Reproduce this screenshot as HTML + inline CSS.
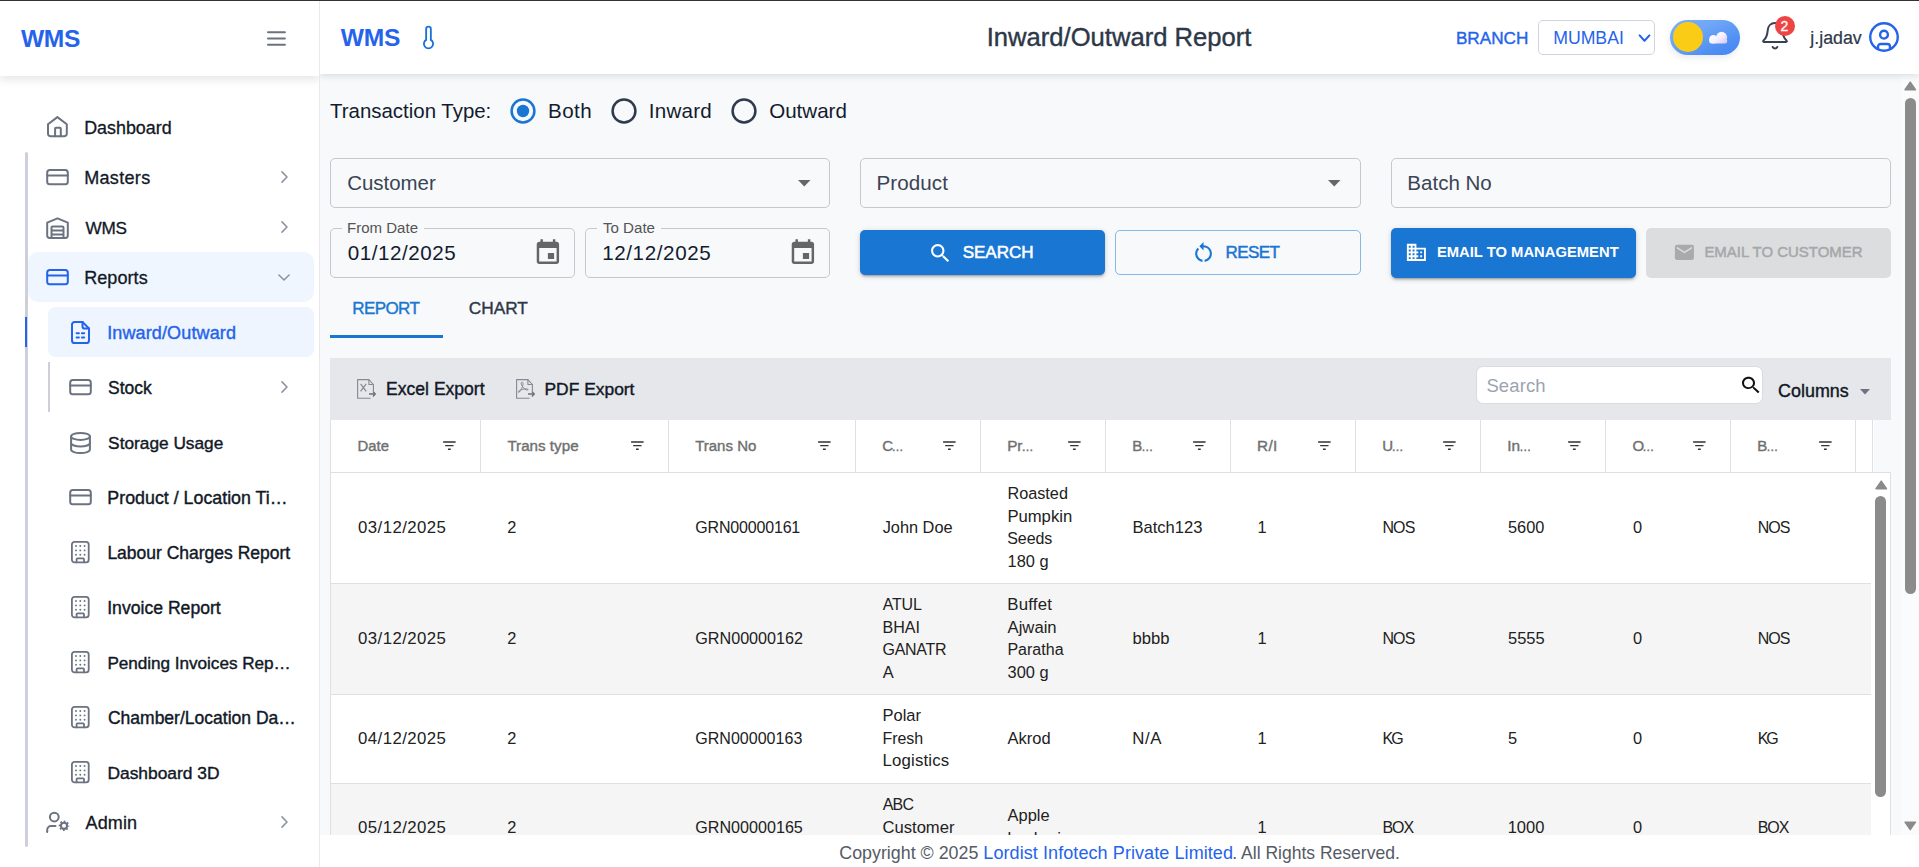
<!DOCTYPE html><html lang="en"><head><meta charset="utf-8"><title>Inward/Outward Report - WMS</title><style>
*{box-sizing:border-box;margin:0;padding:0}
html,body{width:1919px;height:867px;overflow:hidden}
body{position:relative;background:#f8f9fb;font-family:"Liberation Sans",sans-serif;color:#212121}
.t{position:absolute;white-space:nowrap;display:block}
.abs{position:absolute}
svg{position:absolute;overflow:visible}
#topline{position:absolute;left:0;top:0;width:1919px;height:1px;background:#333;z-index:50}
#sidebar{position:absolute;left:0;top:0;width:320px;height:867px;background:#fff;border-right:1px solid #e7e9ee;z-index:5}
#sbhead{position:absolute;left:0;top:0;width:319px;height:75.5px;background:#fff;box-shadow:0 4px 8px rgba(15,23,42,.10);z-index:3;clip-path:inset(0 0 -24px 0)}
#sbnav{position:absolute;left:0;top:76px;width:319px;height:791px}
.guide{position:absolute;left:25px;top:76px;width:3px;height:694.5px;background:#cdd0da;border-radius:2px}
.navrow{position:absolute;left:27.5px;width:286.5px;height:50px;border-radius:10px}
.navrow.open{background:#eff6ff}
.subrow{position:absolute;left:48px;width:266px;height:49.5px;border-radius:8px}
.subrow.active{background:#eef5ff}
#topbar{position:absolute;left:320px;top:0;width:1599px;height:74px;background:#fff;box-shadow:0 2px 7px rgba(15,23,42,.13);z-index:4}
#main{position:absolute;left:320px;top:74px;width:1599px;height:761px;overflow:hidden}
#footer{position:absolute;left:320px;top:834.5px;width:1599px;height:32.5px;background:#fff;z-index:6}
.field{position:absolute;border:1px solid #c6c8cc;border-radius:5px}
.btn{position:absolute;border-radius:5px}
.legend{position:absolute;background:#f8f9fb;height:4px;top:-2px}
#grid{position:absolute;left:10px;top:284px;width:1561px;height:520px;border:1px solid #e0e0e0;background:#fff}
#gtool{position:absolute;left:-1px;top:-1px;width:1561px;height:61.5px;background:#e6e7eb}
#ghead{position:absolute;left:0;top:60.5px;width:1559px;height:53px;background:#fff;border-bottom:1px solid #e0e0e0}
.hc{position:absolute;top:0;height:52.5px;border-right:1px solid #e0e0e0}
.row{position:absolute;left:0;width:1540px;border-bottom:1px solid #e0e0e0}
.row.alt{background:#f5f5f5}
.w{display:block;position:static;width:0;height:0;margin:0;padding:0;border:0;text-decoration:none}
</style></head><body>
<div id="topline"></div>
<aside id="sidebar">
<div id="sbhead">
<div class="t" style="left:21.00px;top:27.00px;font-size:24.6px;line-height:24.6px;color:#2563eb;letter-spacing:-0.354px;font-weight:700;">WMS</div>
<svg style="left:264px;top:28px" width="25" height="21" viewBox="264 28 25 21"><path d="M268 32.200H284.900M268 38.500H284.900M268 44.800H284.900" fill="none" stroke="#6b7280" stroke-width="2" stroke-linecap="round"/></svg>
</div>
<nav>
<div class="guide" style="top:152px"></div>
<a class="w">
<div class="navrow " style="top:102px"></div>
<svg style="left:45px;top:114px" width="26" height="26" viewBox="45 114 26 26"><g fill="none" stroke="#6b7280" stroke-width="2" stroke-linecap="round" stroke-linejoin="round"><path d="M48 124.300L57.400 117.100L66.800 124.300V133.700a2.600 2.600 0 0 1-2.600 2.600H50.600a2.600 2.600 0 0 1-2.600-2.600z"/><path d="M55.100 136.300V128.600a.8.800 0 0 1 .8-.8h4.100a.8.800 0 0 1 .8.800V136.300"/></g></svg>
<span class="t" style="left:84.17px;top:120.00px;font-size:17.89px;line-height:17.89px;color:#111827;-webkit-text-stroke:0.3px #111827;">Dashboard</span>
</a>
<a class="w">
<div class="navrow " style="top:152px"></div>
<svg style="left:45px;top:167.0px" width="26" height="21" viewBox="45 167 26 21"><g fill="none" stroke="#6b7280" stroke-width="2" stroke-linecap="round" stroke-linejoin="round"><rect x="47.200" y="170.100" width="20.600" height="14.200" rx="2.600"/><path d="M47.200 175.600H67.800"/></g></svg>
<span class="t" style="left:84.16px;top:169.00px;font-size:18.04px;line-height:18.04px;color:#111827;letter-spacing:0.322px;-webkit-text-stroke:0.3px #111827;">Masters</span>
<svg style="left:280.5px;top:171px" width="7" height="12" viewBox="0 0 7 12"><path d="M1 .9l5 5.1-5 5.1" fill="none" stroke="#8b919d" stroke-width="1.5" stroke-linecap="round" stroke-linejoin="round"/></svg>
</a>
<a class="w">
<div class="navrow " style="top:202px"></div>
<svg style="left:45px;top:215px" width="26" height="26" viewBox="45 215 26 26"><g fill="none" stroke="#6b7280" stroke-width="2" stroke-linecap="round" stroke-linejoin="round"><path d="M47.200 222.700L57.500 218.300L67.800 222.700V235.600a2.400 2.400 0 0 1-2.400 2.400H49.600a2.400 2.400 0 0 1-2.400-2.400z"/><path d="M51.500 238V227.600a1.200 1.200 0 0 1 1.200-1.200h9.600a1.200 1.200 0 0 1 1.200 1.200V238M51.500 230.400H63.500M51.500 234.500H63.500"/></g></svg>
<span class="t" style="left:85.60px;top:220.00px;font-size:17.16px;line-height:17.16px;color:#111827;letter-spacing:-0.251px;-webkit-text-stroke:0.3px #111827;">WMS</span>
<svg style="left:280.5px;top:221px" width="7" height="12" viewBox="0 0 7 12"><path d="M1 .9l5 5.1-5 5.1" fill="none" stroke="#8b919d" stroke-width="1.5" stroke-linecap="round" stroke-linejoin="round"/></svg>
</a>
<a class="w">
<div class="navrow open" style="top:252px"></div>
<svg style="left:45px;top:267.0px" width="26" height="21" viewBox="45 167 26 21"><g fill="none" stroke="#2563eb" stroke-width="2" stroke-linecap="round" stroke-linejoin="round"><rect x="47.200" y="170.100" width="20.600" height="14.200" rx="2.600"/><path d="M47.200 175.600H67.800"/></g></svg>
<span class="t" style="left:84.16px;top:269.00px;font-size:18.04px;line-height:18.04px;color:#111827;letter-spacing:0.070px;-webkit-text-stroke:0.3px #111827;">Reports</span>
<svg style="left:278px;top:273.8px" width="12" height="7" viewBox="0 0 12 7"><path d="M.9 1l5.1 5 5.1-5" fill="none" stroke="#8b919d" stroke-width="1.5" stroke-linecap="round" stroke-linejoin="round"/></svg>
</a>
<div class="abs" style="left:24.8px;top:317px;width:2px;height:30px;background:#2563eb"></div>
<div class="abs" style="left:48.4px;top:362px;width:1.4px;height:49.5px;background:#cdd0da"></div>
<a class="w">
<div class="subrow active" style="top:307.2px"></div>
<svg style="left:71px;top:321.2px" width="19" height="23" viewBox="0 0 19 23"><g fill="none" stroke="#2563eb" stroke-width="2" stroke-linecap="round" stroke-linejoin="round"><path d="M11.5 1H3.6A2.6 2.6 0 0 0 1 3.6v15.8A2.6 2.6 0 0 0 3.6 22h11.8a2.6 2.6 0 0 0 2.6-2.6V7.5z"/><path d="M11.5 1v4.4a2.1 2.1 0 0 0 2.1 2.1H18"/><path d="M5.6 12.3h2.3M10.9 12.3h2.3M5.6 16.6h2.3M10.9 16.6h2.3"/></g></svg>
<span class="t" style="left:107.18px;top:324.00px;font-size:18.04px;line-height:18.04px;color:#2563eb;letter-spacing:0.115px;-webkit-text-stroke:0.4px #2563eb;">Inward/Outward</span>
</a>
<a class="w">
<div class="subrow " style="top:362.2px"></div>
<svg style="left:68.2px;top:377.4px" width="26" height="21" viewBox="45 167 26 21"><g fill="none" stroke="#6b7280" stroke-width="2" stroke-linecap="round" stroke-linejoin="round"><rect x="47.200" y="170.100" width="20.600" height="14.200" rx="2.600"/><path d="M47.200 175.600H67.800"/></g></svg>
<span class="t" style="left:108.10px;top:380.00px;font-size:17.48px;line-height:17.48px;color:#111827;-webkit-text-stroke:0.4px #111827;">Stock</span>
<svg style="left:280.5px;top:381px" width="7" height="12" viewBox="0 0 7 12"><path d="M1 .9l5 5.1-5 5.1" fill="none" stroke="#8b919d" stroke-width="1.5" stroke-linecap="round" stroke-linejoin="round"/></svg>
</a>
<a class="w">
<div class="subrow " style="top:417.2px"></div>
<svg style="left:70px;top:431.5px" width="21" height="22" viewBox="0 0 21 22"><g fill="none" stroke="#6b7280" stroke-width="2" stroke-linecap="round" stroke-linejoin="round"><ellipse cx="10.5" cy="4.4" rx="9.4" ry="3.5"/><path d="M1.1 4.4v13.2c0 1.9 4.2 3.5 9.4 3.5s9.4-1.6 9.4-3.5V4.4"/><path d="M1.1 11c0 1.9 4.2 3.5 9.4 3.5s9.4-1.6 9.4-3.5"/></g></svg>
<span class="t" style="left:108.11px;top:435.00px;font-size:17.27px;line-height:17.27px;color:#111827;-webkit-text-stroke:0.4px #111827;">Storage Usage</span>
</a>
<a class="w">
<div class="subrow " style="top:472.2px"></div>
<svg style="left:68.2px;top:487.4px" width="26" height="21" viewBox="45 167 26 21"><g fill="none" stroke="#6b7280" stroke-width="2" stroke-linecap="round" stroke-linejoin="round"><rect x="47.200" y="170.100" width="20.600" height="14.200" rx="2.600"/><path d="M47.200 175.600H67.800"/></g></svg>
<span class="t" style="left:107.37px;top:490.00px;font-size:17.82px;line-height:17.82px;color:#111827;-webkit-text-stroke:0.4px #111827;">Product / Location Ti…</span>
</a>
<a class="w">
<div class="subrow " style="top:527.2px"></div>
<svg style="left:71.1px;top:541.3px" width="19" height="23" viewBox="0 0 19 23"><g fill="none" stroke="#6b7280" stroke-width="1.8" stroke-linecap="round" stroke-linejoin="round"><rect x=".9" y=".9" width="16.8" height="20.4" rx="2.6"/><path d="M5.6 21.3v-3a.9.9 0 0 1 .9-.9h5.6a.9.9 0 0 1 .9.9v3"/><circle cx="5" cy="5" r=".95" fill="#6b7280" stroke="none"/><circle cx="9.3" cy="5" r=".95" fill="#6b7280" stroke="none"/><circle cx="13.6" cy="5" r=".95" fill="#6b7280" stroke="none"/><circle cx="5" cy="9.4" r=".95" fill="#6b7280" stroke="none"/><circle cx="9.3" cy="9.4" r=".95" fill="#6b7280" stroke="none"/><circle cx="13.6" cy="9.4" r=".95" fill="#6b7280" stroke="none"/><circle cx="5" cy="13.8" r=".95" fill="#6b7280" stroke="none"/><circle cx="9.3" cy="13.8" r=".95" fill="#6b7280" stroke="none"/><circle cx="13.6" cy="13.8" r=".95" fill="#6b7280" stroke="none"/></g></svg>
<span class="t" style="left:107.40px;top:545.00px;font-size:17.49px;line-height:17.49px;color:#111827;-webkit-text-stroke:0.4px #111827;">Labour Charges Report</span>
</a>
<a class="w">
<div class="subrow " style="top:582.2px"></div>
<svg style="left:71.1px;top:596.3px" width="19" height="23" viewBox="0 0 19 23"><g fill="none" stroke="#6b7280" stroke-width="1.8" stroke-linecap="round" stroke-linejoin="round"><rect x=".9" y=".9" width="16.8" height="20.4" rx="2.6"/><path d="M5.6 21.3v-3a.9.9 0 0 1 .9-.9h5.6a.9.9 0 0 1 .9.9v3"/><circle cx="5" cy="5" r=".95" fill="#6b7280" stroke="none"/><circle cx="9.3" cy="5" r=".95" fill="#6b7280" stroke="none"/><circle cx="13.6" cy="5" r=".95" fill="#6b7280" stroke="none"/><circle cx="5" cy="9.4" r=".95" fill="#6b7280" stroke="none"/><circle cx="9.3" cy="9.4" r=".95" fill="#6b7280" stroke="none"/><circle cx="13.6" cy="9.4" r=".95" fill="#6b7280" stroke="none"/><circle cx="5" cy="13.8" r=".95" fill="#6b7280" stroke="none"/><circle cx="9.3" cy="13.8" r=".95" fill="#6b7280" stroke="none"/><circle cx="13.6" cy="13.8" r=".95" fill="#6b7280" stroke="none"/></g></svg>
<span class="t" style="left:107.21px;top:600.00px;font-size:17.63px;line-height:17.63px;color:#111827;-webkit-text-stroke:0.4px #111827;">Invoice Report</span>
</a>
<a class="w">
<div class="subrow " style="top:637.2px"></div>
<svg style="left:71.1px;top:651.3px" width="19" height="23" viewBox="0 0 19 23"><g fill="none" stroke="#6b7280" stroke-width="1.8" stroke-linecap="round" stroke-linejoin="round"><rect x=".9" y=".9" width="16.8" height="20.4" rx="2.6"/><path d="M5.6 21.3v-3a.9.9 0 0 1 .9-.9h5.6a.9.9 0 0 1 .9.9v3"/><circle cx="5" cy="5" r=".95" fill="#6b7280" stroke="none"/><circle cx="9.3" cy="5" r=".95" fill="#6b7280" stroke="none"/><circle cx="13.6" cy="5" r=".95" fill="#6b7280" stroke="none"/><circle cx="5" cy="9.4" r=".95" fill="#6b7280" stroke="none"/><circle cx="9.3" cy="9.4" r=".95" fill="#6b7280" stroke="none"/><circle cx="13.6" cy="9.4" r=".95" fill="#6b7280" stroke="none"/><circle cx="5" cy="13.8" r=".95" fill="#6b7280" stroke="none"/><circle cx="9.3" cy="13.8" r=".95" fill="#6b7280" stroke="none"/><circle cx="13.6" cy="13.8" r=".95" fill="#6b7280" stroke="none"/></g></svg>
<span class="t" style="left:107.43px;top:655.00px;font-size:17.16px;line-height:17.16px;color:#111827;letter-spacing:-0.040px;-webkit-text-stroke:0.4px #111827;">Pending Invoices Rep…</span>
</a>
<a class="w">
<div class="subrow " style="top:692.2px"></div>
<svg style="left:71.1px;top:706.3px" width="19" height="23" viewBox="0 0 19 23"><g fill="none" stroke="#6b7280" stroke-width="1.8" stroke-linecap="round" stroke-linejoin="round"><rect x=".9" y=".9" width="16.8" height="20.4" rx="2.6"/><path d="M5.6 21.3v-3a.9.9 0 0 1 .9-.9h5.6a.9.9 0 0 1 .9.9v3"/><circle cx="5" cy="5" r=".95" fill="#6b7280" stroke="none"/><circle cx="9.3" cy="5" r=".95" fill="#6b7280" stroke="none"/><circle cx="13.6" cy="5" r=".95" fill="#6b7280" stroke="none"/><circle cx="5" cy="9.4" r=".95" fill="#6b7280" stroke="none"/><circle cx="9.3" cy="9.4" r=".95" fill="#6b7280" stroke="none"/><circle cx="13.6" cy="9.4" r=".95" fill="#6b7280" stroke="none"/><circle cx="5" cy="13.8" r=".95" fill="#6b7280" stroke="none"/><circle cx="9.3" cy="13.8" r=".95" fill="#6b7280" stroke="none"/><circle cx="13.6" cy="13.8" r=".95" fill="#6b7280" stroke="none"/></g></svg>
<span class="t" style="left:107.92px;top:710.00px;font-size:17.53px;line-height:17.53px;color:#111827;-webkit-text-stroke:0.4px #111827;">Chamber/Location Da…</span>
</a>
<a class="w">
<div class="subrow " style="top:747.2px"></div>
<svg style="left:71.1px;top:761.3px" width="19" height="23" viewBox="0 0 19 23"><g fill="none" stroke="#6b7280" stroke-width="1.8" stroke-linecap="round" stroke-linejoin="round"><rect x=".9" y=".9" width="16.8" height="20.4" rx="2.6"/><path d="M5.6 21.3v-3a.9.9 0 0 1 .9-.9h5.6a.9.9 0 0 1 .9.9v3"/><circle cx="5" cy="5" r=".95" fill="#6b7280" stroke="none"/><circle cx="9.3" cy="5" r=".95" fill="#6b7280" stroke="none"/><circle cx="13.6" cy="5" r=".95" fill="#6b7280" stroke="none"/><circle cx="5" cy="9.4" r=".95" fill="#6b7280" stroke="none"/><circle cx="9.3" cy="9.4" r=".95" fill="#6b7280" stroke="none"/><circle cx="13.6" cy="9.4" r=".95" fill="#6b7280" stroke="none"/><circle cx="5" cy="13.8" r=".95" fill="#6b7280" stroke="none"/><circle cx="9.3" cy="13.8" r=".95" fill="#6b7280" stroke="none"/><circle cx="13.6" cy="13.8" r=".95" fill="#6b7280" stroke="none"/></g></svg>
<span class="t" style="left:107.41px;top:765.00px;font-size:17.4px;line-height:17.4px;color:#111827;-webkit-text-stroke:0.4px #111827;">Dashboard 3D</span>
</a>
<a class="w">
<div class="navrow " style="top:797px"></div>
<svg style="left:44px;top:810px" width="28" height="26" viewBox="44 810 28 26"><g fill="none" stroke="#6b7280" stroke-width="2" stroke-linecap="round" stroke-linejoin="round"><circle cx="54.300" cy="817.050" r="4.400"/><path d="M47.200 832v-2.100a3.900 3.900 0 0 1 3.900-3.900h4.400"/></g><circle cx="64" cy="825.800" r="3.100" fill="none" stroke="#6b7280" stroke-width="2.100"/><circle cx="64" cy="825.800" r="4.550" fill="none" stroke="#6b7280" stroke-width="1.500" stroke-dasharray="1.700 1.874" stroke-dashoffset=".85"/></svg>
<span class="t" style="left:85.60px;top:814.00px;font-size:18.04px;line-height:18.04px;color:#111827;letter-spacing:0.095px;-webkit-text-stroke:0.3px #111827;">Admin</span>
<svg style="left:280.5px;top:816px" width="7" height="12" viewBox="0 0 7 12"><path d="M1 .9l5 5.1-5 5.1" fill="none" stroke="#8b919d" stroke-width="1.5" stroke-linecap="round" stroke-linejoin="round"/></svg>
</a>
</nav></aside>
<header id="topbar">
<div class="t" style="left:20.70px;top:26.00px;font-size:24.6px;line-height:24.6px;color:#2563eb;letter-spacing:-0.254px;font-weight:700;">WMS</div>
<svg style="left:100px;top:24px" width="17" height="27" viewBox="420 24 17 27"><path d="M426.15 39.85V29.05a2.35 2.35 0 0 1 4.7 0V39.85A4.6 4.6 0 1 1 426.15 39.85z" fill="none" stroke="#1a73d4" stroke-width="1.85"/></svg>
<h1 class="t" style="left:666.69px;top:25.00px;font-size:25.62px;line-height:25.62px;color:#2d3748;-webkit-text-stroke:0.4px #2d3748;font-weight:400;">Inward/Outward Report</h1>
<span class="t" style="left:1135.93px;top:30.00px;font-size:17.17px;line-height:17.17px;color:#2563eb;-webkit-text-stroke:0.4px #2563eb;">BRANCH</span>
<div class="abs" style="left:1217.5px;top:20px;width:117.5px;height:35px;border:1.3px solid #cfd4de;border-radius:5px;background:#fff"></div>
<span class="t" style="left:1233.19px;top:30.00px;font-size:17.67px;line-height:17.67px;color:#2563eb;">MUMBAI</span>
<svg style="left:1317.5px;top:33.5px" width="13" height="9" viewBox="0 0 13 9"><path d="M1.600 1.400l4.900 5.300 4.900-5.300" fill="none" stroke="#2563eb" stroke-width="2" stroke-linecap="round" stroke-linejoin="round"/></svg>
<div class="abs" style="left:1350px;top:20px;width:70px;height:35px;border-radius:18px;background:linear-gradient(155deg,#7bb0f8 0%,#6ea5f6 35%,#4f8ff3 75%,#4285f4 100%);box-shadow:-1px 3px 6px rgba(40,60,100,.10)"><div class="abs" style="left:2.8px;top:2px;width:30.2px;height:30.2px;border-radius:50%;background:#facc15"></div><svg style="left:37px;top:9px" width="24" height="18" viewBox="1707 29 24 18"><defs><linearGradient id="cg" gradientUnits="userSpaceOnUse" x1="1712" y1="32" x2="1722" y2="45"><stop offset="0" stop-color="#ffffff"/><stop offset=".55" stop-color="#f6f1fd"/><stop offset="1" stop-color="#dccdf3"/></linearGradient></defs><g fill="url(#cg)"><circle cx="1713.400" cy="39.300" r="4.200"/><circle cx="1721.600" cy="37.300" r="5.500"/><rect x="1709.200" y="38.500" width="18" height="5" rx="2.500"/></g></svg></div>
<svg style="left:1441px;top:20px" width="29" height="32" viewBox="1761 20 29 32"><g fill="none" stroke="#374151" stroke-width="2" stroke-linecap="round" stroke-linejoin="round"><path d="M1775 23.1c-4.3 0-7 3.3-7.3 7.2-.3 4.2-1.3 7.6-4.2 10.3-.6.6-.2 1.4.6 1.4h21.8c.8 0 1.2-.8.6-1.4-2.9-2.7-3.9-6.1-4.2-10.3-.3-3.900-3-7.200-7.300-7.200z"/><path d="M1772.700 47a2.600 2.600 0 0 0 4.600 0"/></g></svg>
<div class="abs" style="left:1455px;top:16px;width:20.2px;height:20.2px;border-radius:50%;background:#ef4444"></div>
<span class="t" style="left:1460.50px;top:19.00px;font-size:14px;line-height:14px;color:#fff;-webkit-text-stroke:0.3px #fff;">2</span>
<span class="t" style="left:1490.33px;top:30.00px;font-size:17.77px;line-height:17.77px;color:#2d3748;-webkit-text-stroke:0.2px #2d3748;">j.jadav</span>
<svg style="left:1548.25px;top:21.1px" width="32" height="32" viewBox="-16 -16 32 32"><defs><clipPath id="uc"><circle r="13.7"/></clipPath></defs><g fill="none" stroke="#2563eb" stroke-width="2.4"><circle r="13.75"/><circle cy="-2.3" r="3.9"/><path clip-path="url(#uc)" d="M-6 15V9.6a2.600 2.600 0 0 1 2.600-2.600h6.800a2.600 2.600 0 0 1 2.600 2.600V15"/></g></svg>
</header>
<main id="main">
<span class="t" style="left:9.99px;top:27.00px;font-size:20.45px;line-height:20.45px;color:#131c2e;">Transaction Type:</span>
<label class="w">
<svg style="left:188.75px;top:22.5px" width="28" height="28" viewBox="-14 -14 28 28"><circle r="11.4" fill="none" stroke="#1976d2" stroke-width="2.5"/><circle r="6.2" fill="#1976d2"/></svg>
<span class="t" style="left:228.05px;top:27.00px;font-size:20.6px;line-height:20.6px;color:#131c2e;letter-spacing:0.409px;">Both</span>
</label><label class="w">
<svg style="left:289.9px;top:22.5px" width="28" height="28" viewBox="-14 -14 28 28"><circle r="11.4" fill="none" stroke="#2f3b4c" stroke-width="2.5"/></svg>
<span class="t" style="left:328.85px;top:27.00px;font-size:20.6px;line-height:20.6px;color:#131c2e;letter-spacing:0.196px;">Inward</span>
</label><label class="w">
<svg style="left:409.75px;top:22.5px" width="28" height="28" viewBox="-14 -14 28 28"><circle r="11.4" fill="none" stroke="#2f3b4c" stroke-width="2.5"/></svg>
<span class="t" style="left:449.18px;top:27.00px;font-size:20.57px;line-height:20.57px;color:#131c2e;">Outward</span>
</label>
<div class="w">
<div class="field" style="left:10px;top:84px;width:500px;height:50px"></div>
<span class="t" style="left:27.18px;top:99.00px;font-size:20.44px;line-height:20.44px;color:#3a4454;">Customer</span>
<svg style="left:477.5px;top:105.69999999999999px" width="13" height="7" viewBox="0 0 13 7"><path d="M0 0h12.500L6.250 6.600z" fill="#666"/></svg>
</div>
<div class="w">
<div class="field" style="left:540px;top:84px;width:500.5px;height:50px"></div>
<span class="t" style="left:556.55px;top:99.00px;font-size:20.6px;line-height:20.6px;color:#3a4454;letter-spacing:0.068px;">Product</span>
<svg style="left:1007.5px;top:105.69999999999999px" width="13" height="7" viewBox="0 0 13 7"><path d="M0 0h12.500L6.250 6.600z" fill="#666"/></svg>
</div>
<div class="field" style="left:1071px;top:84px;width:500px;height:50px"></div>
<span class="t" style="left:1087.36px;top:99.00px;font-size:20.51px;line-height:20.51px;color:#3a4454;">Batch No</span>
<div class="field" style="left:10px;top:154px;width:244.5px;height:50px"><div class="legend" style="left:11px;width:82px"></div></div>
<span class="t" style="left:27.00px;top:146.00px;font-size:15.04px;line-height:15.04px;color:#555;">From Date</span>
<span class="t" style="left:27.68px;top:169.00px;font-size:20.6px;line-height:20.6px;color:#131c2e;letter-spacing:0.551px;">01/12/2025</span>
<svg style="left:213.27999999999997px;top:163.95999999999998px" width="29.8" height="29.8" viewBox="0 0 24 24"><path d="M17 12h-5v5h5v-5zM16 1v2H8V1H6v2H5c-1.11 0-1.990.9-1.990 2L3 19c0 1.100.890 2 2 2h14c1.100 0 2-.9 2-2V5c0-1.100-.9-2-2-2h-1V1h-2zm3 18H5V8h14v11z" fill="#666"/></svg>
<div class="field" style="left:265px;top:154px;width:245px;height:50px"><div class="legend" style="left:11px;width:64px"></div></div>
<span class="t" style="left:282.90px;top:146.00px;font-size:15.13px;line-height:15.13px;color:#555;">To Date</span>
<span class="t" style="left:282.16px;top:169.00px;font-size:20.6px;line-height:20.6px;color:#131c2e;letter-spacing:0.610px;">12/12/2025</span>
<svg style="left:468.0799999999999px;top:163.95999999999998px" width="29.8" height="29.8" viewBox="0 0 24 24"><path d="M17 12h-5v5h5v-5zM16 1v2H8V1H6v2H5c-1.11 0-1.990.9-1.990 2L3 19c0 1.100.890 2 2 2h14c1.100 0 2-.9 2-2V5c0-1.100-.9-2-2-2h-1V1h-2zm3 18H5V8h14v11z" fill="#666"/></svg>
<div class="w" role="button">
<div class="btn" style="left:540px;top:156px;width:245px;height:45px;background:#1976d2;box-shadow:0 3px 2px -2px rgba(0,0,0,.2),0 2px 3px rgba(0,0,0,.14),0 1px 6px rgba(0,0,0,.12);"></div>
<svg style="left:607.61px;top:167.31px" width="24.7" height="24.7" viewBox="0 0 24 24"><path d="M15.5 14h-.79l-.28-.27C15.410 12.590 16 11.110 16 9.500 16 5.910 13.090 3 9.500 3S3 5.910 3 9.500 5.910 16 9.500 16c1.610 0 3.090-.59 4.230-1.570l.27.28v.79l5 4.990L20.490 19l-4.990-5zm-6 0C7.010 14 5 11.990 5 9.500S7.010 5 9.500 5 14 7.010 14 9.500 11.990 14 9.500 14z" fill="#fff"/></svg>
<span class="t" style="left:642.72px;top:170.00px;font-size:17.06px;line-height:17.06px;color:#fff;letter-spacing:-0.057px;-webkit-text-stroke:0.55px #fff;">SEARCH</span>
</div>
<div class="w" role="button">
<div class="btn" style="left:795px;top:156px;width:245.5px;height:45px;border:1px solid rgba(25,118,210,.5)"></div>
<svg style="left:870.5160000000001px;top:165.908px" width="25.1" height="25.1" viewBox="0 0 24 24"><path d="M12 5V2L8 6l4 4V7c3.310 0 6 2.690 6 6 0 2.970-2.170 5.430-5 5.910v2.020c3.950-.49 7-3.850 7-7.930 0-4.420-3.580-8-8-8zm-6 8c0-1.650.67-3.150 1.760-4.240L6.340 7.340C4.900 8.790 4 10.790 4 13c0 4.080 3.050 7.440 7 7.930v-2.020c-2.830-.48-5-2.940-5-5.910z" fill="#1976d2"/></svg>
<span class="t" style="left:905.54px;top:170.00px;font-size:17.06px;line-height:17.06px;color:#1976d2;letter-spacing:-0.639px;-webkit-text-stroke:0.5px #1976d2;">RESET</span>
</div>
<div class="w" role="button">
<div class="btn" style="left:1071px;top:154px;width:245px;height:50px;background:#1976d2;box-shadow:0 3px 2px -2px rgba(0,0,0,.2),0 2px 3px rgba(0,0,0,.14),0 1px 6px rgba(0,0,0,.12);"></div>
<svg style="left:1085.0px;top:166.95000000000002px" width="22.8" height="22.8" viewBox="0 0 24 24"><path d="M12 7V3H2v18h20V7H12zM6 19H4v-2h2v2zm0-4H4v-2h2v2zm0-4H4V9h2v2zm0-4H4V5h2v2zm4 12H8v-2h2v2zm0-4H8v-2h2v2zm0-4H8V9h2v2zm0-4H8V5h2v2zm10 12h-8v-2h2v-2h-2v-2h2v-2h-2V9h8v10zm-2-8h-2v2h2v-2zm0 4h-2v2h2v-2z" fill="#fff"/></svg>
<span class="t" style="left:1116.91px;top:171.00px;font-size:14.79px;line-height:14.79px;color:#fff;font-weight:700;">EMAIL TO MANAGEMENT</span>
</div>
<div class="w" role="button">
<div class="btn" style="left:1326px;top:154px;width:245px;height:50px;background:#dcdddf"></div>
<svg style="left:1353.35px;top:167.24px" width="22.8" height="22.8" viewBox="0 0 24 24"><path d="M20 4H4c-1.100 0-1.990.9-1.990 2L2 18c0 1.100.9 2 2 2h16c1.100 0 2-.9 2-2V6c0-1.100-.9-2-2-2zm0 4l-8 5-8-5V6l8 5 8-5v2z" fill="#a9aaac"/></svg>
<span class="t" style="left:1384.40px;top:171.00px;font-size:14.96px;line-height:14.96px;color:#a6a7a9;-webkit-text-stroke:0.5px #a6a7a9;">EMAIL TO CUSTOMER</span>
</div>
<div class="w" role="tablist">
<span class="t" style="left:32.24px;top:226.00px;font-size:17.06px;line-height:17.06px;color:#1976d2;letter-spacing:-0.612px;-webkit-text-stroke:0.4px #1976d2;">REPORT</span>
<span class="t" style="left:148.74px;top:226.00px;font-size:17.26px;line-height:17.26px;color:#2d3748;-webkit-text-stroke:0.4px #2d3748;">CHART</span>
<div class="abs" style="left:10px;top:261px;width:112.8px;height:3px;background:#1976d2"></div>
</div>
<section id="grid" style="left:10px;top:284px">
<div id="gtool">
<svg style="left:26.600000000000023px;top:21.19999999999999px" width="20" height="20" viewBox="0 0 20 20"><g fill="none" stroke="#858993" stroke-width="1.1" stroke-linejoin="round"><path d="M16.400 12V5.500L11.900.6H.6v18.700h13"/><path d="M11.900.6v4.900h4.500"/><path d="M3.600 4.800l5.600 7.600M9.200 4.800l-5.600 7.600" stroke-width="1.2"/><path d="M12 15h6.200M15.900 12.600l2.400 2.400-2.400 2.400" stroke-width="1.400" stroke="#6d727d"/></g></svg>
<span class="t" style="left:56.10px;top:23.00px;font-size:17.56px;line-height:17.56px;color:#111827;-webkit-text-stroke:0.4px #111827;">Excel Export</span>
<svg style="left:185.60000000000002px;top:21.19999999999999px" width="20" height="20" viewBox="0 0 20 20"><g fill="none" stroke="#858993" stroke-width="1.1" stroke-linejoin="round"><path d="M16.400 12V5.500L11.900.6H.6v18.700h13"/><path d="M11.900.6v4.900h4.500"/><path d="M5.400 3.600c1.200-1 2 .2 1.600 2.100-.5 2.600-2.100 5.600-3.600 7.300-.9 1-1.700.1-.7-.8 2-1.700 5.800-2.500 8.300-2.300 1.500.2 1.300 1.400-.1 1.200-2.400-.5-4.800-3.500-5.600-6-.3-.9-.3-1.200.1-1.500z" stroke-width="1"/><path d="M12 15h6.200M15.900 12.600l2.400 2.400-2.400 2.400" stroke-width="1.400" stroke="#6d727d"/></g></svg>
<span class="t" style="left:214.51px;top:23.00px;font-size:17.41px;line-height:17.41px;color:#111827;-webkit-text-stroke:0.4px #111827;">PDF Export</span>
<div class="abs" style="left:1145.5px;top:8.300000000000011px;width:287.5px;height:38.2px;background:#fff;border:1px solid #d9dbe0;border-radius:7px"></div>
<span class="t" style="left:1156.46px;top:19.00px;font-size:18.45px;line-height:18.45px;color:#9ca3af;letter-spacing:0.123px;">Search</span>
<svg style="left:1409.0px;top:16.20999999999998px" width="24" height="22.5" viewBox="0 0 24 24" preserveAspectRatio="none"><path d="M15.5 14h-.79l-.28-.27C15.410 12.590 16 11.110 16 9.500 16 5.910 13.090 3 9.500 3S3 5.910 3 9.500 5.910 16 9.500 16c1.610 0 3.090-.59 4.230-1.570l.27.28v.79l5 4.990L20.490 19l-4.990-5zm-6 0C7.010 14 5 11.990 5 9.500S7.010 5 9.500 5 14 7.010 14 9.500 11.990 14 9.500 14z" fill="#111"/></svg>
<span class="t" style="left:1448.11px;top:25.00px;font-size:17.9px;line-height:17.9px;color:#111827;-webkit-text-stroke:0.4px #111827;">Columns</span>
<svg style="left:1530px;top:30.80000000000001px" width="10" height="6" viewBox="0 0 10 6"><path d="M0 0h10L5 5.500z" fill="#6b7280"/></svg>
</div>
<div id="ghead">
<div class="hc" style="left:0.25px;width:149.75px"></div>
<span class="t" style="left:26.51px;top:19.50px;font-size:14.89px;line-height:14.89px;color:#707070;-webkit-text-stroke:0.4px #707070;">Date</span>
<svg style="left:110.22px;top:17.38px" width="16.7" height="17.3" viewBox="0 0 24 24" preserveAspectRatio="none"><path d="M10 18h4v-2h-4v2zM3 6v2h18V6H3zm3 7h12v-2H6v2z" fill="#333"/></svg>
<div class="hc" style="left:150.00px;width:187.75px"></div>
<span class="t" style="left:176.40px;top:18.50px;font-size:15.2px;line-height:15.2px;color:#707070;-webkit-text-stroke:0.4px #707070;">Trans type</span>
<svg style="left:297.97px;top:17.38px" width="16.7" height="17.3" viewBox="0 0 24 24" preserveAspectRatio="none"><path d="M10 18h4v-2h-4v2zM3 6v2h18V6H3zm3 7h12v-2H6v2z" fill="#333"/></svg>
<div class="hc" style="left:337.75px;width:187.25px"></div>
<span class="t" style="left:364.15px;top:18.50px;font-size:15.03px;line-height:15.03px;color:#707070;-webkit-text-stroke:0.4px #707070;">Trans No</span>
<svg style="left:485.22px;top:17.38px" width="16.7" height="17.3" viewBox="0 0 24 24" preserveAspectRatio="none"><path d="M10 18h4v-2h-4v2zM3 6v2h18V6H3zm3 7h12v-2H6v2z" fill="#333"/></svg>
<div class="hc" style="left:525.00px;width:124.90px"></div>
<span class="t" style="left:551.25px;top:18.50px;font-size:15px;line-height:15px;color:#707070;-webkit-text-stroke:0.4px #707070;">C<span style="font-size:11.96px;letter-spacing:0;margin-left:-1.54px">…</span></span>
<svg style="left:610.12px;top:17.38px" width="16.7" height="17.3" viewBox="0 0 24 24" preserveAspectRatio="none"><path d="M10 18h4v-2h-4v2zM3 6v2h18V6H3zm3 7h12v-2H6v2z" fill="#333"/></svg>
<div class="hc" style="left:649.90px;width:125.00px"></div>
<span class="t" style="left:676.13px;top:18.50px;font-size:15.27px;line-height:15.27px;color:#707070;-webkit-text-stroke:0.4px #707070;">Pr<span style="font-size:11.96px;letter-spacing:0;margin-left:-0.88px">…</span></span>
<svg style="left:735.12px;top:17.38px" width="16.7" height="17.3" viewBox="0 0 24 24" preserveAspectRatio="none"><path d="M10 18h4v-2h-4v2zM3 6v2h18V6H3zm3 7h12v-2H6v2z" fill="#333"/></svg>
<div class="hc" style="left:774.90px;width:125.00px"></div>
<span class="t" style="left:801.15px;top:18.50px;font-size:15px;line-height:15px;color:#707070;-webkit-text-stroke:0.4px #707070;">B<span style="font-size:11.96px;letter-spacing:0;margin-left:-1.04px">…</span></span>
<svg style="left:860.12px;top:17.38px" width="16.7" height="17.3" viewBox="0 0 24 24" preserveAspectRatio="none"><path d="M10 18h4v-2h-4v2zM3 6v2h18V6H3zm3 7h12v-2H6v2z" fill="#333"/></svg>
<div class="hc" style="left:899.90px;width:125.00px"></div>
<span class="t" style="left:926.12px;top:18.50px;font-size:15.37px;line-height:15.37px;color:#707070;letter-spacing:0.246px;-webkit-text-stroke:0.4px #707070;">R/I</span>
<svg style="left:985.12px;top:17.38px" width="16.7" height="17.3" viewBox="0 0 24 24" preserveAspectRatio="none"><path d="M10 18h4v-2h-4v2zM3 6v2h18V6H3zm3 7h12v-2H6v2z" fill="#333"/></svg>
<div class="hc" style="left:1024.90px;width:125.10px"></div>
<span class="t" style="left:1051.15px;top:18.50px;font-size:15px;line-height:15px;color:#707070;-webkit-text-stroke:0.4px #707070;">U<span style="font-size:11.96px;letter-spacing:0;margin-left:-1.52px">…</span></span>
<svg style="left:1110.22px;top:17.38px" width="16.7" height="17.3" viewBox="0 0 24 24" preserveAspectRatio="none"><path d="M10 18h4v-2h-4v2zM3 6v2h18V6H3zm3 7h12v-2H6v2z" fill="#333"/></svg>
<div class="hc" style="left:1150.00px;width:125.10px"></div>
<span class="t" style="left:1176.22px;top:18.50px;font-size:15.37px;line-height:15.37px;color:#707070;letter-spacing:0.056px;-webkit-text-stroke:0.4px #707070;">In<span style="font-size:11.96px;letter-spacing:0;margin-left:-0.80px">…</span></span>
<svg style="left:1235.32px;top:17.38px" width="16.7" height="17.3" viewBox="0 0 24 24" preserveAspectRatio="none"><path d="M10 18h4v-2h-4v2zM3 6v2h18V6H3zm3 7h12v-2H6v2z" fill="#333"/></svg>
<div class="hc" style="left:1275.10px;width:125.00px"></div>
<span class="t" style="left:1301.50px;top:18.50px;font-size:15px;line-height:15px;color:#707070;-webkit-text-stroke:0.4px #707070;">O<span style="font-size:11.96px;letter-spacing:0;margin-left:-1.99px">…</span></span>
<svg style="left:1360.32px;top:17.38px" width="16.7" height="17.3" viewBox="0 0 24 24" preserveAspectRatio="none"><path d="M10 18h4v-2h-4v2zM3 6v2h18V6H3zm3 7h12v-2H6v2z" fill="#333"/></svg>
<div class="hc" style="left:1400.10px;width:125.20px"></div>
<span class="t" style="left:1426.35px;top:18.50px;font-size:15px;line-height:15px;color:#707070;-webkit-text-stroke:0.4px #707070;">B<span style="font-size:11.96px;letter-spacing:0;margin-left:-1.04px">…</span></span>
<svg style="left:1485.52px;top:17.38px" width="16.7" height="17.3" viewBox="0 0 24 24" preserveAspectRatio="none"><path d="M10 18h4v-2h-4v2zM3 6v2h18V6H3zm3 7h12v-2H6v2z" fill="#333"/></svg>
<div class="hc" style="left:1525.30px;width:16.60px"></div>
<div class="abs" style="left:1543.2px;top:0;width:16.500px;height:52px;background:#f8f9fb"></div>
</div>
<div class="row" style="top:113.5px;height:111.0px">
<span class="t" style="left:27.07px;top:47.50px;font-size:16.81px;line-height:16.81px;color:#212121;letter-spacing:0.413px;">03/12/2025</span>
<span class="t" style="left:176.34px;top:46.50px;font-size:16.4px;line-height:16.4px;color:#212121;">2</span>
<span class="t" style="left:364.27px;top:47.50px;font-size:15.99px;line-height:15.99px;color:#212121;letter-spacing:-0.166px;">GRN00000161</span>
<span class="t" style="left:551.66px;top:46.50px;font-size:16.34px;line-height:16.34px;color:#212121;">John Doe</span>
<span class="t" style="left:676.41px;top:12.50px;font-size:16.26px;line-height:16.26px;color:#212121;">Roasted</span>
<span class="t" style="left:676.38px;top:36.50px;font-size:16.66px;line-height:16.66px;color:#212121;">Pumpkin</span>
<span class="t" style="left:676.25px;top:58.50px;font-size:15.99px;line-height:15.99px;color:#212121;letter-spacing:-0.066px;">Seeds</span>
<span class="t" style="left:676.56px;top:80.50px;font-size:16.4px;line-height:16.4px;color:#212121;">180 g</span>
<span class="t" style="left:801.39px;top:47.50px;font-size:16.57px;line-height:16.57px;color:#212121;">Batch123</span>
<span class="t" style="left:926.56px;top:46.50px;font-size:16.4px;line-height:16.4px;color:#212121;">1</span>
<span class="t" style="left:1051.43px;top:47.50px;font-size:15.99px;line-height:15.99px;color:#212121;letter-spacing:-0.873px;">NOS</span>
<span class="t" style="left:1176.99px;top:46.50px;font-size:16.35px;line-height:16.35px;color:#212121;">5600</span>
<span class="t" style="left:1301.93px;top:46.50px;font-size:16.4px;line-height:16.4px;color:#212121;">0</span>
<span class="t" style="left:1426.63px;top:47.50px;font-size:15.99px;line-height:15.99px;color:#212121;letter-spacing:-0.873px;">NOS</span>
</div>
<div class="row alt" style="top:224.5px;height:111.0px">
<span class="t" style="left:27.07px;top:47.50px;font-size:16.81px;line-height:16.81px;color:#212121;letter-spacing:0.413px;">03/12/2025</span>
<span class="t" style="left:176.34px;top:46.50px;font-size:16.4px;line-height:16.4px;color:#212121;">2</span>
<span class="t" style="left:364.26px;top:46.50px;font-size:16.16px;line-height:16.16px;color:#212121;">GRN00000162</span>
<span class="t" style="left:551.66px;top:13.50px;font-size:15.99px;line-height:15.99px;color:#212121;letter-spacing:-0.183px;">ATUL</span>
<span class="t" style="left:551.53px;top:35.50px;font-size:16.08px;line-height:16.08px;color:#212121;">BHAI</span>
<span class="t" style="left:551.52px;top:58.50px;font-size:15.99px;line-height:15.99px;color:#212121;letter-spacing:-0.267px;">GANATR</span>
<span class="t" style="left:551.66px;top:80.50px;font-size:16.4px;line-height:16.4px;color:#212121;">A</span>
<span class="t" style="left:676.37px;top:13.50px;font-size:16.81px;line-height:16.81px;color:#212121;letter-spacing:0.183px;">Buffet</span>
<span class="t" style="left:676.56px;top:36.50px;font-size:16.67px;line-height:16.67px;color:#212121;">Ajwain</span>
<span class="t" style="left:676.43px;top:57.50px;font-size:16.05px;line-height:16.05px;color:#212121;">Paratha</span>
<span class="t" style="left:676.56px;top:80.50px;font-size:16.4px;line-height:16.4px;color:#212121;">300 g</span>
<span class="t" style="left:801.38px;top:47.50px;font-size:16.65px;line-height:16.65px;color:#212121;">bbbb</span>
<span class="t" style="left:926.56px;top:46.50px;font-size:16.4px;line-height:16.4px;color:#212121;">1</span>
<span class="t" style="left:1051.43px;top:47.50px;font-size:15.99px;line-height:15.99px;color:#212121;letter-spacing:-0.873px;">NOS</span>
<span class="t" style="left:1176.99px;top:46.50px;font-size:16.51px;line-height:16.51px;color:#212121;">5555</span>
<span class="t" style="left:1301.93px;top:46.50px;font-size:16.4px;line-height:16.4px;color:#212121;">0</span>
<span class="t" style="left:1426.63px;top:47.50px;font-size:15.99px;line-height:15.99px;color:#212121;letter-spacing:-0.873px;">NOS</span>
</div>
<div class="row" style="top:335.5px;height:89.0px">
<span class="t" style="left:27.07px;top:36.50px;font-size:16.81px;line-height:16.81px;color:#212121;letter-spacing:0.413px;">04/12/2025</span>
<span class="t" style="left:176.34px;top:35.50px;font-size:16.4px;line-height:16.4px;color:#212121;">2</span>
<span class="t" style="left:364.27px;top:35.50px;font-size:16.06px;line-height:16.06px;color:#212121;">GRN00000163</span>
<span class="t" style="left:551.49px;top:12.50px;font-size:16.49px;line-height:16.49px;color:#212121;">Polar</span>
<span class="t" style="left:551.53px;top:36.50px;font-size:15.99px;line-height:15.99px;color:#212121;letter-spacing:-0.047px;">Fresh</span>
<span class="t" style="left:551.47px;top:58.50px;font-size:16.81px;line-height:16.81px;color:#212121;letter-spacing:0.169px;">Logistics</span>
<span class="t" style="left:676.56px;top:35.50px;font-size:16.49px;line-height:16.49px;color:#212121;">Akrod</span>
<span class="t" style="left:801.37px;top:36.50px;font-size:16.81px;line-height:16.81px;color:#212121;letter-spacing:0.551px;">N/A</span>
<span class="t" style="left:926.56px;top:35.50px;font-size:16.4px;line-height:16.4px;color:#212121;">1</span>
<span class="t" style="left:1051.43px;top:36.50px;font-size:15.99px;line-height:15.99px;color:#212121;letter-spacing:-1.915px;">KG</span>
<span class="t" style="left:1176.99px;top:35.50px;font-size:16.4px;line-height:16.4px;color:#212121;">5</span>
<span class="t" style="left:1301.93px;top:35.50px;font-size:16.4px;line-height:16.4px;color:#212121;">0</span>
<span class="t" style="left:1426.63px;top:36.50px;font-size:15.99px;line-height:15.99px;color:#212121;letter-spacing:-1.915px;">KG</span>
</div>
<div class="row alt" style="top:424.5px;height:89.0px">
<span class="t" style="left:27.07px;top:36.50px;font-size:16.81px;line-height:16.81px;color:#212121;letter-spacing:0.413px;">05/12/2025</span>
<span class="t" style="left:176.34px;top:35.50px;font-size:16.4px;line-height:16.4px;color:#212121;">2</span>
<span class="t" style="left:364.26px;top:35.50px;font-size:16.14px;line-height:16.14px;color:#212121;">GRN00000165</span>
<span class="t" style="left:551.66px;top:13.50px;font-size:15.99px;line-height:15.99px;color:#212121;letter-spacing:-0.714px;">ABC</span>
<span class="t" style="left:551.49px;top:36.50px;font-size:16.63px;line-height:16.63px;color:#212121;">Customer</span>
<span class="t" style="left:676.56px;top:23.50px;font-size:16.46px;line-height:16.46px;color:#212121;">Apple</span>
<span class="t" style="left:676.38px;top:47.50px;font-size:16.81px;line-height:16.81px;color:#212121;letter-spacing:0.075px;">kashmir</span>
<span class="t" style="left:926.56px;top:35.50px;font-size:16.4px;line-height:16.4px;color:#212121;">1</span>
<span class="t" style="left:1051.43px;top:36.50px;font-size:15.99px;line-height:15.99px;color:#212121;letter-spacing:-1.010px;">BOX</span>
<span class="t" style="left:1176.66px;top:35.50px;font-size:16.51px;line-height:16.51px;color:#212121;">1000</span>
<span class="t" style="left:1301.93px;top:35.50px;font-size:16.4px;line-height:16.4px;color:#212121;">0</span>
<span class="t" style="left:1426.63px;top:36.50px;font-size:15.99px;line-height:15.99px;color:#212121;letter-spacing:-1.010px;">BOX</span>
</div>
<div class="abs" style="left:1540px;top:113.5px;width:19px;height:420px;background:#fff"></div>
<svg style="left:1543.9px;top:120.80000000000001px" width="12.5" height="9.8" viewBox="0 0 12.5 9.8"><path d="M6.250 1.100L11.500 8.700H1z" fill="#8a8a8a" stroke="#8a8a8a" stroke-width="1.400" stroke-linejoin="round"/></svg>
<div class="abs" style="left:1544.4px;top:137.3px;width:10.5px;height:300.7px;background:#8b8b8b;border-radius:5.500px"></div>
</section>
<div class="abs" style="left:1581px;top:0;width:18px;height:761px;background:#fafbfc"></div>
<svg style="left:1584.3px;top:6.900000000000006px" width="12.5" height="9.8" viewBox="0 0 12.5 9.8"><path d="M6.250 1.100L11.500 8.700H1z" fill="#8a8a8a" stroke="#8a8a8a" stroke-width="1.400" stroke-linejoin="round"/></svg>
<div class="abs" style="left:1585px;top:24px;width:11.2px;height:495.5px;background:#8b8b8b;border-radius:5.600px"></div>
<svg style="left:1584.3px;top:746.6px" width="12.5" height="9.8" viewBox="0 0 12.5 9.8"><path d="M6.250 8.700L11.500 1.100H1z" fill="#8a8a8a" stroke="#8a8a8a" stroke-width="1.400" stroke-linejoin="round"/></svg>
</main>
<footer id="footer">
<span class="t" style="left:519.31px;top:10.50px;font-size:17.83px;line-height:17.83px;color:#555b66;">Copyright © 2025</span>
<a class="t" style="left:663.36px;top:9.50px;font-size:18.04px;line-height:18.04px;color:#2563eb;letter-spacing:0.067px;">Lordist Infotech Private Limited</a>
<span class="t" style="left:912.32px;top:10.50px;font-size:17.53px;line-height:17.53px;color:#555b66;">. All Rights Reserved.</span>
</footer>
</body></html>
